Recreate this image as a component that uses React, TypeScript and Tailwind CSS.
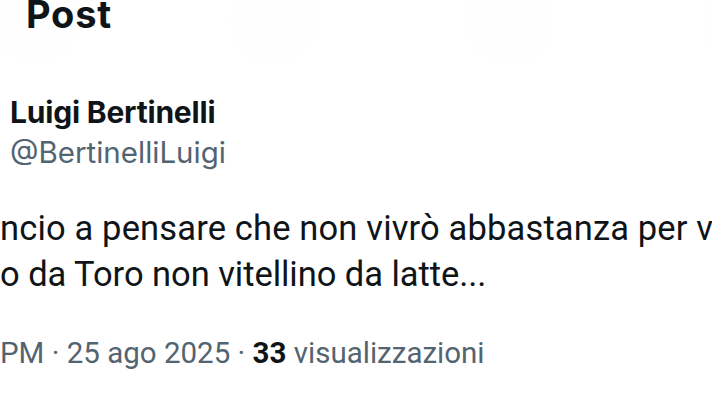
export default function App() {
  return (
    <div className="relative w-[712px] h-[402px] overflow-hidden bg-white text-[#0f1419]">
      <div className="absolute left-[-8px] top-[-23px] w-[87px] h-[87px] rounded-full bg-[#fefefe]" />
      <div className="absolute left-[230px] top-[-23px] w-[87px] h-[87px] rounded-full bg-[#fefefe]" />
      <div className="absolute left-[466px] top-[-23px] w-[87px] h-[87px] rounded-full bg-[#fefefe]" />
      <div className="absolute left-[704px] top-[-23px] w-[87px] h-[87px] rounded-full bg-[#fefefe]" />
      <div className="relative flex flex-col">
        <div className="mt-[-5px] pl-[26px] h-[38px] text-[38px] leading-[38px] font-bold font-['Inter',sans-serif] tracking-[0.8px]">
          Post
        </div>
        <div className="mt-[64px] pl-[10px] text-[30px] leading-[30px] font-bold font-['Inter',sans-serif] tracking-[-0.2px]">
          Luigi Bertinelli
        </div>
        <div className="mt-[11px] pl-[10px] text-[29.5px] leading-[29.5px] text-[#536471] font-['Inter',sans-serif]">
          @BertinelliLuigi
        </div>
        <div className="mt-[37px] whitespace-nowrap text-[34.5px] leading-[46px] font-['Roboto',sans-serif]">
          <div className="tracking-[0.15px]">ncio a pensare che non vivrò abbastanza per vedere</div>
          <div className="tracking-[-0.05px]">o da Toro non vitellino da latte...</div>
        </div>
        <div className="mt-[42px] whitespace-nowrap text-[29.5px] leading-[28.5px] text-[#536471] font-['Roboto',sans-serif]">
          PM · 25 ago 2025 · <span className="font-bold text-[#0f1419]">33</span> visualizzazioni
        </div>
      </div>
    </div>
  );
}
